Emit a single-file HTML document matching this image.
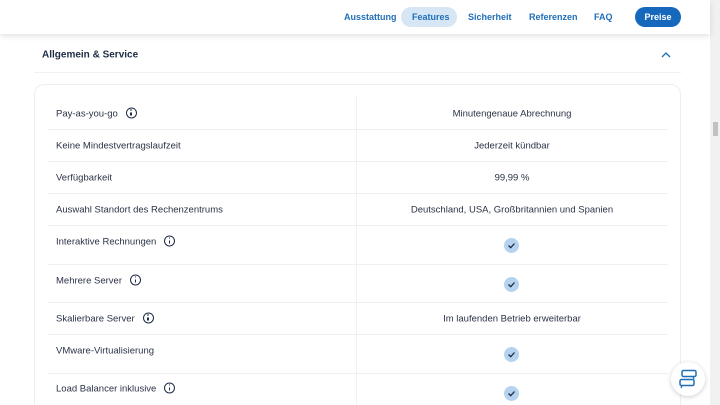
<!DOCTYPE html>
<html style="overflow:hidden;height:405px"><head><meta charset="utf-8"><style>
*{margin:0;padding:0;box-sizing:border-box}
body{width:720px;height:405px;overflow:hidden;background:#fff;font-family:"Liberation Sans",sans-serif;position:relative;color:#2a3245}
.hdr{position:absolute;left:0;top:0;width:710px;height:34px;background:#fff;box-shadow:0 2px 6px rgba(0,0,0,.12);z-index:2}
.nav{position:absolute;top:17px;transform:translateY(-50%);font-size:9px;color:#1f6fb8;font-weight:bold;white-space:nowrap}
.pill{position:absolute;left:401px;top:7px;width:56px;height:20px;border-radius:10px;background:#d6e6f5}
.btn{position:absolute;left:635px;top:7px;width:46px;height:20px;border-radius:10px;background:#1668bd;color:#fff;font-size:9px;font-weight:bold;text-align:center;line-height:20px}
.t{position:absolute;font-size:9.5px;white-space:nowrap;transform:translateY(-50%);margin-top:1px}
.c{transform:translate(-50%,-50%)}
.hl{position:absolute;height:1px;background:#eef0f3}
.info{display:inline-block;width:11px;height:11px;border:1.3px solid #1d2b45;border-radius:50%;vertical-align:middle;margin-left:8px;position:relative;top:-1px}
.info:after{content:"";position:absolute;left:3.6px;top:3.5px;width:1.3px;height:3.5px;background:#1d2b45}
.info:before{content:"";position:absolute;left:3.6px;top:1.2px;width:1.3px;height:1.3px;background:#1d2b45}
.chk{position:absolute;left:504px;width:15px;height:15px;border-radius:50%;background:#b5d3ee}
.chk svg{position:absolute;left:3px;top:3px}
</style></head><body>
<div class="hdr">
<div class="pill"></div>
<div class="nav" style="left:344px">Ausstattung</div>
<div class="nav" style="left:412px">Features</div>
<div class="nav" style="left:468px">Sicherheit</div>
<div class="nav" style="left:529px">Referenzen</div>
<div class="nav" style="left:594px">FAQ</div>
<div class="btn">Preise</div>
</div>
<div style="position:absolute;left:710px;top:0;width:10px;height:405px;background:#f1f1f1"></div>
<div style="position:absolute;left:713px;top:122px;width:5px;height:14px;background:#c1c1c1"></div>
<div class="t" style="left:42px;top:54px;font-weight:bold;font-size:10px;color:#1d2b45">Allgemein &amp; Service</div>
<svg style="position:absolute;left:661px;top:52px" width="10" height="6"><path d="M1 5L5 1L9 5" stroke="#1f6fb8" stroke-width="1.3" fill="none"/></svg>
<div class="hl" style="left:34px;top:72px;width:647px;background:#f0f1f3"></div>
<div style="position:absolute;left:34px;top:84px;width:647px;height:340px;border:1px solid #eceef1;border-radius:10px"></div>
<div style="position:absolute;left:356px;top:97px;width:1px;height:310px;background:#eef0f3"></div>
<div class="hl" style="left:48px;top:129px;width:620px"></div>
<div class="hl" style="left:48px;top:161px;width:620px"></div>
<div class="hl" style="left:48px;top:193px;width:620px"></div>
<div class="hl" style="left:48px;top:225px;width:620px"></div>
<div class="hl" style="left:48px;top:264px;width:620px"></div>
<div class="hl" style="left:48px;top:302px;width:620px"></div>
<div class="hl" style="left:48px;top:334px;width:620px"></div>
<div class="hl" style="left:48px;top:373px;width:620px"></div>
<div class="t" style="left:56px;top:113px">Pay-as-you-go<span class="info"></span></div>
<div class="t c" style="left:512px;top:113px">Minutengenaue Abrechnung</div>
<div class="t" style="left:56px;top:145px">Keine Mindestvertragslaufzeit</div>
<div class="t c" style="left:512px;top:145px">Jederzeit kündbar</div>
<div class="t" style="left:56px;top:177px">Verfügbarkeit</div>
<div class="t c" style="left:512px;top:177px">99,99 %</div>
<div class="t" style="left:56px;top:209px">Auswahl Standort des Rechenzentrums</div>
<div class="t c" style="left:512px;top:209px">Deutschland, USA, Großbritannien und Spanien</div>
<div class="t" style="left:56px;top:241px">Interaktive Rechnungen<span class="info"></span></div>
<div class="t" style="left:56px;top:280px">Mehrere Server<span class="info"></span></div>
<div class="t" style="left:56px;top:318px">Skalierbare Server<span class="info"></span></div>
<div class="t c" style="left:512px;top:318px">Im laufenden Betrieb erweiterbar</div>
<div class="t" style="left:56px;top:350px">VMware-Virtualisierung</div>
<div class="t" style="left:56px;top:388px">Load Balancer inklusive<span class="info"></span></div>
<div class="chk" style="top:238px"><svg width="9" height="9"><path d="M1.5 4.5L3.7 6.7L7.5 2.5" stroke="#1d2b45" stroke-width="1.3" fill="none"/></svg></div>
<div class="chk" style="top:277px"><svg width="9" height="9"><path d="M1.5 4.5L3.7 6.7L7.5 2.5" stroke="#1d2b45" stroke-width="1.3" fill="none"/></svg></div>
<div class="chk" style="top:347px"><svg width="9" height="9"><path d="M1.5 4.5L3.7 6.7L7.5 2.5" stroke="#1d2b45" stroke-width="1.3" fill="none"/></svg></div>
<div class="chk" style="top:386px"><svg width="9" height="9"><path d="M1.5 4.5L3.7 6.7L7.5 2.5" stroke="#1d2b45" stroke-width="1.3" fill="none"/></svg></div>
<div style="position:absolute;left:671px;top:362px;width:34px;height:34px;border-radius:50%;background:#fff;box-shadow:0 1px 5px rgba(0,0,0,.2)">
<svg style="position:absolute;left:7px;top:7px" width="20" height="20"><rect x="4" y="1.5" width="14" height="6" rx="1.5" stroke="#1f6fb8" stroke-width="1.5" fill="none"/><path d="M15 7.5L16 10" stroke="#1f6fb8" stroke-width="1.3"/><rect x="2" y="10.5" width="14" height="6" rx="1.5" stroke="#1f6fb8" stroke-width="1.5" fill="none"/><path d="M4 16.5L3 19" stroke="#1f6fb8" stroke-width="1.3"/></svg>
</div>
</body></html>
